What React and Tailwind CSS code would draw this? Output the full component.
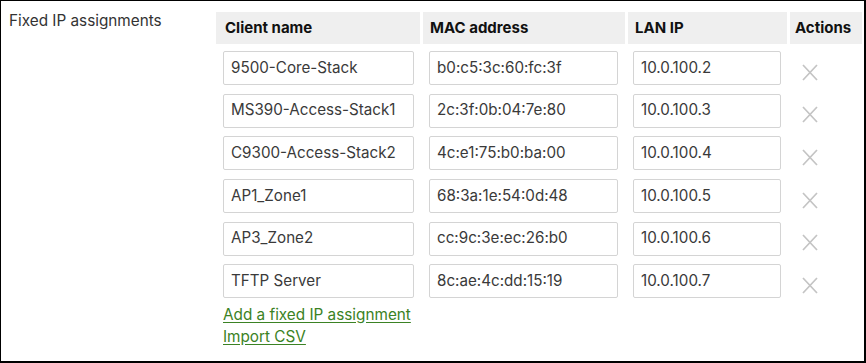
import React from 'react';

const rows = [
  { name: '9500-Core-Stack', mac: 'b0:c5:3c:60:fc:3f', ip: '10.0.100.2' },
  { name: 'MS390-Access-Stack1', mac: '2c:3f:0b:04:7e:80', ip: '10.0.100.3' },
  { name: 'C9300-Access-Stack2', mac: '4c:e1:75:b0:ba:00', ip: '10.0.100.4' },
  { name: 'AP1_Zone1', mac: '68:3a:1e:54:0d:48', ip: '10.0.100.5' },
  { name: 'AP3_Zone2', mac: 'cc:9c:3e:ec:26:b0', ip: '10.0.100.6' },
  { name: 'TFTP Server', mac: '8c:ae:4c:dd:15:19', ip: '10.0.100.7' },
];

const Field = ({ value }) => (
  <div className="h-[34px] border border-[#d4d4d4] bg-white rounded-[2px] px-[7px] flex items-center text-[15.2px] text-[#3a3a3a] whitespace-nowrap overflow-hidden">
    {value}
  </div>
);

const RemoveIcon = () => (
  <svg width="16" height="17" viewBox="0 0 16 17" className="block">
    <path d="M1 1 L15 16 M15 1 L1 16" stroke="#c4c4c4" strokeWidth="1.7" fill="none" />
  </svg>
);

export default function App() {
  return (
    <div
      className="w-[866px] h-[363px] bg-white border-l border-t-[1px] border-r-2 border-b-2 border-black flex overflow-hidden"
      style={{ fontFamily: 'Inter, "Liberation Sans", sans-serif' }}
    >
      <div className="w-[215px] pl-[8px] pt-[10px] text-[15.3px] leading-[20px] text-[#333]">
        Fixed IP assignments
      </div>
      <div className="pt-[11px]">
        <div className="grid grid-cols-[204px_202px_159px_72px] gap-x-[3px] gap-y-[3px]">
          <div className="h-[32px] bg-[#efefef] flex items-center pl-[9px] text-[15px] font-bold text-[#111]">Client name</div>
          <div className="h-[32px] bg-[#efefef] flex items-center pl-[7px] text-[15px] font-bold text-[#111]">MAC address</div>
          <div className="h-[32px] bg-[#efefef] flex items-center pl-[7px] text-[15px] font-bold text-[#111]">LAN IP</div>
          <div className="h-[32px] bg-[#efefef] flex items-center pl-[5px] text-[15px] font-bold text-[#111]">Actions</div>
        </div>
        <div className="grid grid-cols-[204px_202px_159px_72px] gap-x-[3px] mt-[3px]">
          {rows.map((r) => (
            <React.Fragment key={r.name}>
              <div className="h-[42.6px] flex items-center pl-[7px] pr-[6px]"><div className="w-full"><Field value={r.name} /></div></div>
              <div className="h-[42.6px] flex items-center pl-[6px] pr-[7px]"><div className="w-full"><Field value={r.mac} /></div></div>
              <div className="h-[42.6px] flex items-center pl-[5px] pr-[6px]"><div className="w-full"><Field value={r.ip} /></div></div>
              <div className="h-[42.6px] flex items-center pl-[12px] pt-[8px]"><RemoveIcon /></div>
            </React.Fragment>
          ))}
        </div>
        <div className="pl-[7px] pt-[1px] flex flex-col items-start text-[15.3px] leading-[22px] text-[#3b8224]">
          <a href="#" className="underline underline-offset-2">Add a fixed IP assignment</a>
          <a href="#" className="underline underline-offset-2">Import CSV</a>
        </div>
      </div>
    </div>
  );
}
